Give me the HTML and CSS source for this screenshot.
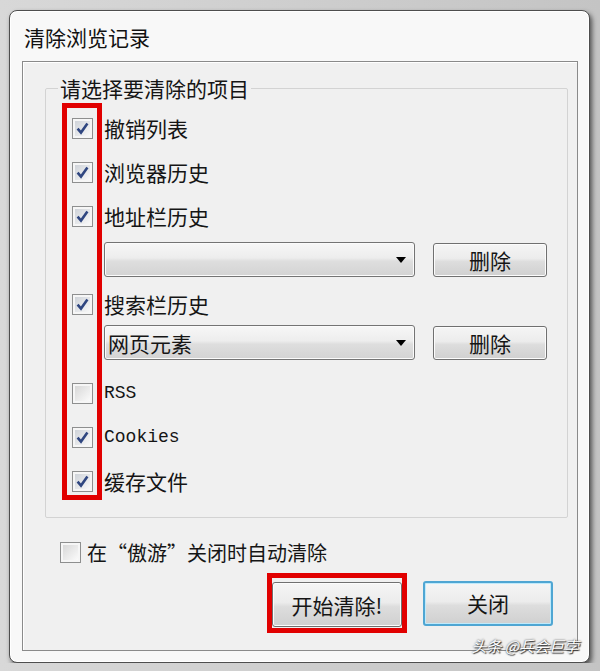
FILE: index.html
```html
<!DOCTYPE html>
<html lang="zh-CN">
<head>
    <meta charset="UTF-8">
    <meta name="viewport" content="width=device-width, initial-scale=1.0">
    <title>清除浏览记录</title>
    <link rel="stylesheet" href="styles.css">
</head>
<body>
    <div class="window">
        <div class="title">清除浏览记录</div>
        <div class="panel">
            <fieldset class="group">
                <legend>请选择要清除的项目</legend>
                <div class="items">
                    <label class="item">
                        <span class="box"><svg viewBox="0 0 15 15"><path d="M2.6 7.6 L6 11.6 L12.4 2.6"/></svg></span>
                        <span>撤销列表</span>
                    </label>
                    <label class="item">
                        <span class="box"><svg viewBox="0 0 15 15"><path d="M2.6 7.6 L6 11.6 L12.4 2.6"/></svg></span>
                        <span>浏览器历史</span>
                    </label>
                    <label class="item">
                        <span class="box"><svg viewBox="0 0 15 15"><path d="M2.6 7.6 L6 11.6 L12.4 2.6"/></svg></span>
                        <span>地址栏历史</span>
                    </label>
                    <div class="combo-row">
                        <div class="combo"><span></span><span class="arrow"></span></div>
                        <button class="btn">删除</button>
                    </div>
                    <label class="item tight">
                        <span class="box"><svg viewBox="0 0 15 15"><path d="M2.6 7.6 L6 11.6 L12.4 2.6"/></svg></span>
                        <span>搜索栏历史</span>
                    </label>
                    <div class="combo-row flush">
                        <div class="combo"><span>网页元素</span><span class="arrow"></span></div>
                        <button class="btn">删除</button>
                    </div>
                    <label class="item spaced">
                        <span class="box empty"></span>
                        <span class="latin">RSS</span>
                    </label>
                    <label class="item">
                        <span class="box"><svg viewBox="0 0 15 15"><path d="M2.6 7.6 L6 11.6 L12.4 2.6"/></svg></span>
                        <span class="latin">Cookies</span>
                    </label>
                    <label class="item">
                        <span class="box"><svg viewBox="0 0 15 15"><path d="M2.6 7.6 L6 11.6 L12.4 2.6"/></svg></span>
                        <span>缓存文件</span>
                    </label>
                    <div class="mark"></div>
                </div>
            </fieldset>

            <label class="auto">
                <span class="box empty"></span>
                <span>在“傲游”关闭时自动清除</span>
            </label>

            <div class="actions">
                <span class="highlight"><button class="btn big">开始清除!</button></span>
                <button class="btn big default">关闭</button>
            </div>
        </div>
        <div class="watermark">头条 @兵会巨孛</div>
    </div>
</body>
</html>
```

FILE: styles.css
```css
* {
    margin: 0;
    padding: 0;
    box-sizing: border-box;
}

body {
    background: linear-gradient(90deg, #d8d8d8, #c4c4c4);
    font-family: "Noto Sans CJK SC", sans-serif;
    color: #151515;
    overflow: hidden;
}

.window {
    position: relative;
    width: 581px;
    margin: 10px 0 0 9px;
    padding: 0 11px 11px 12px;
    background: #f8f8f8;
    border: 1px solid #4e4e4e;
    border-radius: 8px;
    box-shadow: inset 0 0 0 1px #fff, 2px 3px 5px rgba(0, 0, 0, 0.6);
}

.title {
    padding: 13px 0 0 2px;
    height: 50px;
    font-size: 21px;
    line-height: 26px;
    color: #111;
}

.panel {
    background: #f0f0f0;
    border: 1px solid #8a8a8a;
    box-shadow: inset 1px 1px 0 #fff;
    padding-bottom: 17px;
}

/* group box */
.group {
    margin: 15px 24px 0 22px;
    padding: 7px 20px 14px 12px;
    border: 1px solid #d3d3d3;
    border-radius: 2px;
}

.group legend {
    padding: 0 2px;
    font-size: 21px;
    line-height: 22px;
}

.items {
    position: relative;
    padding-left: 14px;
}

.item {
    display: flex;
    align-items: center;
    gap: 11px;
    height: 44px;
    font-size: 21px;
}

.item.tight {
    height: 42px;
    margin-top: 6px;
}

.item.spaced {
    margin-top: 11px;
}

.latin {
    font-family: "Liberation Mono", monospace;
    font-size: 18px;
}

/* checkbox */
.box {
    display: flex;
    flex: none;
    width: 21px;
    height: 21px;
    padding: 2px;
    border: 1px solid #8e8f8f;
    background: linear-gradient(135deg, #cfd3d9, #f8f8f8) content-box, #f6f6f6;
}

.box svg {
    width: 100%;
    height: 100%;
    fill: none;
    stroke: #2f4680;
    stroke-width: 2.6;
}

.box.empty {
    background: linear-gradient(135deg, #d8d8d8, #fafafa) content-box, #f6f6f6;
}

/* combo + delete */
.combo-row {
    display: flex;
    align-items: center;
    gap: 18px;
    margin: 4px 0 0 32px;
}

.combo-row.flush {
    margin-top: 0;
}

.combo {
    display: flex;
    align-items: center;
    justify-content: space-between;
    width: 311px;
    height: 35px;
    padding: 0 8px 0 3px;
    border: 1px solid #747474;
    border-radius: 3px;
    background: linear-gradient(#f7f7f7, #ededed 45%, #dedede 55%, #d3d3d3);
    box-shadow: inset 0 0 0 1px #fbfbfb;
    font-size: 21px;
}

.arrow {
    width: 0;
    height: 0;
    border-left: 5px solid transparent;
    border-right: 5px solid transparent;
    border-top: 6px solid #000;
}

.btn {
    width: 114px;
    height: 34px;
    border: 1px solid #707070;
    border-radius: 3px;
    background: linear-gradient(#f5f5f5, #ececec 45%, #dddddd 55%, #d0d0d0);
    box-shadow: inset 0 0 0 1px #fcfcfc;
    font-family: "Noto Sans CJK SC", sans-serif;
    font-size: 21px;
    color: #151515;
}

.btn.big {
    width: 130px;
    height: 45px;
}

.btn.default {
    border: 2px solid #4fa6d3;
    box-shadow: inset 0 0 0 1px #bfeafb;
}

/* red annotation frames */
.mark {
    position: absolute;
    left: 4px;
    top: -3px;
    width: 40px;
    height: 397px;
    border: 5px solid #e10000;
}

.highlight {
    display: inline-flex;
    padding: 4px 0 1px;
    border: 5px solid #e10000;
}

.auto {
    display: flex;
    align-items: center;
    gap: 6px;
    height: 28px;
    margin: 20px 0 0 37px;
    font-size: 20px;
}

.actions {
    display: flex;
    align-items: center;
    justify-content: flex-end;
    gap: 16px;
    margin-top: 7px;
    padding-right: 24px;
}

.watermark {
    position: absolute;
    right: 10px;
    bottom: 6px;
    font-size: 15px;
    font-style: italic;
    color: #fff;
    text-shadow: 0 0 2px #333, 1px 1px 1px #333;
}
```
